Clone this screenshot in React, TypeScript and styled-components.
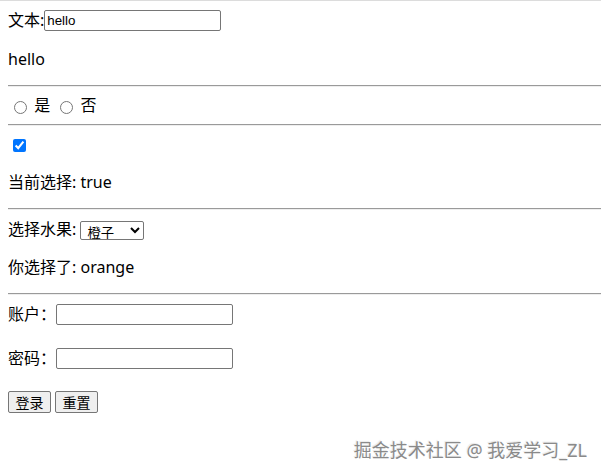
import React, { useState } from "react";
import styled, { createGlobalStyle } from "styled-components";

const GlobalStyle = createGlobalStyle`
  html {
    border-top: 1px solid #dcdcdc;
    background: #ffffff;
  }
  body {
    margin: 8px 0 0 8px;
    font-family: "Noto Sans", "Noto Sans CJK SC", sans-serif;
    font-size: 16px;
    line-height: 21px;
    color: #000;
  }
`;

const Page = styled.div`
  position: relative;
  min-height: 464px;
`;

const Line = styled.div<{ $h?: number }>`
  display: flex;
  align-items: center;
  height: ${(p) => p.$h ?? 21}px;
  white-space: pre;
`;

const Para = styled.p`
  margin: 16px 0 15px;
  padding-top: 1px;
  line-height: 21px;
  white-space: pre;
`;

const Divider = styled.hr`
  margin: 8px 0;
  height: 0;
  border: none;
  border-top: 1px solid #9a9a9a;
  border-bottom: 1px solid #eeeeee;
`;

const TextInput = styled.input`
  box-sizing: border-box;
  width: 177px;
  height: 21px;
  margin: 0;
  padding: 1px 2px;
  border: 1px solid #767676;
  border-radius: 2px;
  font: 13.33px "Liberation Sans", "Noto Sans CJK SC", sans-serif;
  color: #000;
  background: #fff;
  outline: none;
`;

const Radio = styled.input`
  width: 13px;
  height: 13px;
  margin: 3px 3px 0 6px;
`;

const Check = styled.input`
  width: 13px;
  height: 13px;
  margin: 1px 3px 0 5px;
  accent-color: #0075ff;
`;

const Select = styled.select`
  box-sizing: border-box;
  width: 64px;
  height: 19px;
  margin: 2px 0 0 0;
  padding: 0 0 0 2px;
  border: 1px solid #767676;
  border-radius: 2px;
  font: 13.33px "Noto Sans CJK SC", "Noto Sans", sans-serif;
  line-height: 15px;
  color: #000;
  background: #fff;
`;

const Form = styled.div`
  display: flex;
  flex-direction: column;
  gap: 21px;
`;

const Buttons = styled.div`
  display: flex;
  gap: 4px;
  height: 22px;
`;

const Button = styled.button`
  box-sizing: border-box;
  width: 43px;
  height: 22px;
  margin: 0;
  padding: 0;
  border: 1px solid #767676;
  border-radius: 2px;
  background: #efefef;
  font: 14px "Noto Sans CJK SC", "Noto Sans", sans-serif;
  line-height: 18px;
  color: #000;
`;

const Watermark = styled.div`
  position: absolute;
  right: 14px;
  top: 429px;
  font-size: 18px;
  line-height: 24px;
  color: #8a8a8a;
  text-shadow: 1px 1px 1px #ffffff, -1px -1px 1px #e8e8e8;
  white-space: pre;
`;

export default function App() {
  const [text, setText] = useState("hello");
  const [checked, setChecked] = useState(true);
  const [fruit, setFruit] = useState("orange");
  return (
    <Page>
      <GlobalStyle />
      <Line $h={23}>
        文本:
        <TextInput value={text} onChange={(e) => setText(e.target.value)} />
      </Line>
      <Para>{text}</Para>
      <Divider />
      <Line>
        <Radio type="radio" name="yn" /> 是 <Radio type="radio" name="yn" /> 否
      </Line>
      <Divider />
      <Line>
        <Check
          type="checkbox"
          checked={checked}
          onChange={(e) => setChecked(e.target.checked)}
        />
      </Line>
      <Para>当前选择: {String(checked)}</Para>
      <Divider />
      <Line $h={22}>
        选择水果:{" "}
        <Select value={fruit} onChange={(e) => setFruit(e.target.value)}>
          <option value="apple">苹果</option>
          <option value="banana">香蕉</option>
          <option value="orange">橙子</option>
        </Select>
      </Line>
      <Para>你选择了: {fruit}</Para>
      <Divider />
      <Form>
        <Line $h={23}>
          账户：
          <TextInput />
        </Line>
        <Line $h={23}>
          密码：
          <TextInput type="password" />
        </Line>
        <Buttons>
          <Button>登录</Button>
          <Button>重置</Button>
        </Buttons>
      </Form>
      <Watermark>掘金技术社区 @ 我爱学习_ZL</Watermark>
    </Page>
  );
}
